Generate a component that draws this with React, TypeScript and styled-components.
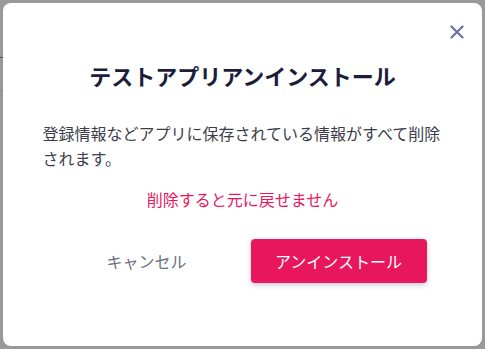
import React from 'react';
import styled, { createGlobalStyle } from 'styled-components';

const GlobalStyle = createGlobalStyle`
  html, body {
    margin: 0;
    padding: 0;
    background: #999999;
    font-family: "Noto Sans CJK JP", "Noto Sans", sans-serif;
  }
`;

const Backdrop = styled.div`
  width: 485px;
  height: 349px;
  box-sizing: border-box;
  padding: 3px;
  background: #999999;
  position: relative;
  overflow: hidden;
  .line {
    position: absolute;
    left: 0;
    height: 1px;
    width: 3px;
  }
`;

const Dialog = styled.div`
  position: relative;
  width: 479px;
  height: 343px;
  box-sizing: border-box;
  background: #fff;
  border-radius: 8px;
  padding: 56px 40px 0;
  display: flex;
  flex-direction: column;
  align-items: center;
`;

const CloseButton = styled.button`
  position: absolute;
  top: 20px;
  right: 17px;
  width: 17px;
  height: 17px;
  padding: 0;
  border: none;
  background: none;
  cursor: pointer;
  display: flex;
  align-items: center;
  justify-content: center;
`;

const Title = styled.h2`
  margin: 0;
  font-size: 22px;
  line-height: 33px;
  font-weight: 700;
  color: #1b1d3c;
  text-align: center;
`;

const Body = styled.p`
  margin: 29px 0 0;
  width: 400px;
  font-size: 16px;
  line-height: 25px;
  color: #3b3d4a;
`;

const Warning = styled.p`
  margin: 16px 0 0;
  font-size: 16px;
  line-height: 25px;
  color: #e8175d;
  text-align: center;
`;

const Actions = styled.div`
  margin-top: 27px;
  display: flex;
  gap: 16px;
`;

const Button = styled.button<{ $primary?: boolean }>`
  width: 176px;
  height: 44px;
  border: none;
  border-radius: 4px;
  font-family: inherit;
  font-size: 16px;
  cursor: pointer;
  background: ${p => (p.$primary ? '#e8175d' : 'transparent')};
  color: ${p => (p.$primary ? '#fff' : '#6c6f82')};
  box-shadow: ${p => (p.$primary ? '0 2px 5px rgba(40, 40, 90, 0.25)' : 'none')};
`;

export default function App() {
  return (
    <>
      <GlobalStyle />
      <Backdrop>
        <div className="line" style={{ top: 57, background: '#4a4f86' }} />
        <div className="line" style={{ top: 90, background: '#8a8a8a' }} />
        <Dialog>
          <CloseButton aria-label="閉じる">
            <svg width="14" height="14" viewBox="0 0 14 14">
              <path
                d="M1.5 1.5 L12.5 12.5 M12.5 1.5 L1.5 12.5"
                stroke="#6c70a0"
                strokeWidth="2.2"
                strokeLinecap="round"
              />
            </svg>
          </CloseButton>
          <Title>テストアプリアンインストール</Title>
          <Body>登録情報などアプリに保存されている情報がすべて削除されます。</Body>
          <Warning>削除すると元に戻せません</Warning>
          <Actions>
            <Button>キャンセル</Button>
            <Button $primary>アンインストール</Button>
          </Actions>
        </Dialog>
      </Backdrop>
    </>
  );
}
